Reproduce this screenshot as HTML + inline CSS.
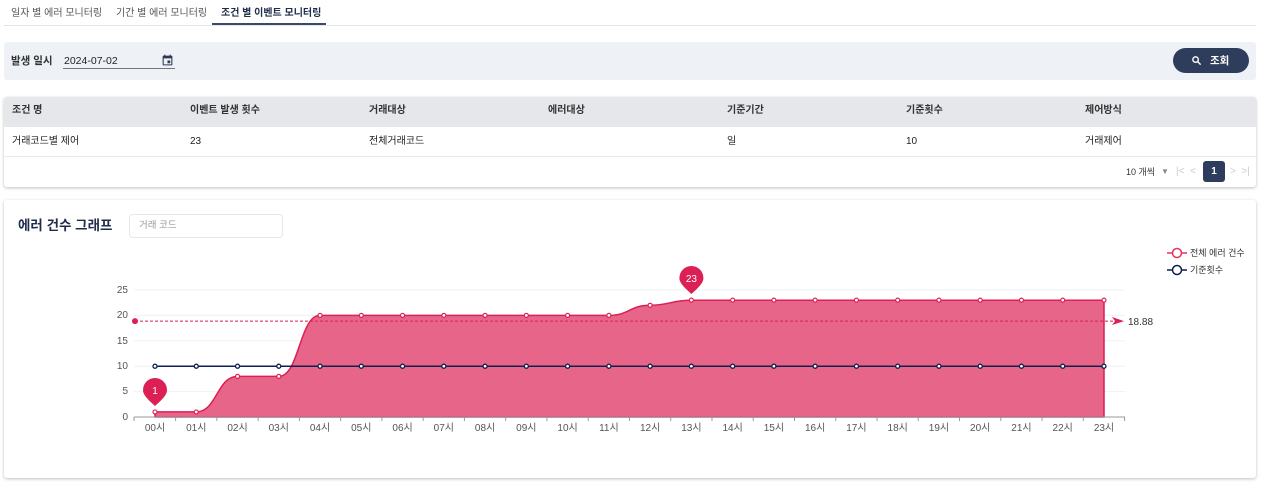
<!DOCTYPE html><html><head><meta charset="utf-8"><style>
body{margin:0;width:1266px;height:488px;background:#fff;font-family:"Liberation Sans","Noto Sans CJK KR",sans-serif;position:relative;overflow:hidden;color:#222}
.a{position:absolute;white-space:nowrap;line-height:12px}
.tab{font-size:10px;color:#555;top:8px}
</style></head><body>
<div class="a" style="left:4px;top:25px;width:1252px;height:1px;background:#e2e4e8"></div>
<div class="a tab" style="left:11px">일자 별 에러 모니터링</div>
<div class="a tab" style="left:116px">기간 별 에러 모니터링</div>
<div class="a tab" style="left:221px;color:#1f2d4a;font-weight:bold">조건 별 이벤트 모니터링</div>
<div class="a" style="left:212px;top:23px;width:114px;height:2px;background:#3b4a6b"></div>

<div class="a" style="left:4px;top:42px;width:1252px;height:38px;background:#eef2f7;border-radius:3px"></div>
<div class="a" style="left:11px;top:55px;font-size:10.5px;font-weight:bold;color:#333">발생 일시</div>
<div class="a" style="left:64px;top:55px;font-size:10.5px;color:#222">2024-07-02</div>
<div class="a" style="left:63px;top:68px;width:112px;height:1px;background:#777"></div>
<svg class="a" style="left:161px;top:53px" width="13" height="14" viewBox="0 0 24 24"><path fill="#2d3a55" d="M19 4h-1V2h-2v2H8V2H6v2H5a2 2 0 0 0-2 2v14a2 2 0 0 0 2 2h14a2 2 0 0 0 2-2V6a2 2 0 0 0-2-2zm0 16H5V9h14v11zm-7-7h5v5h-5z"/></svg>
<div class="a" style="left:1173px;top:48px;width:76px;height:25px;border-radius:13px;background:#2f3d5c"></div>
<svg class="a" style="left:1191px;top:55px" width="11" height="11" viewBox="0 0 24 24"><circle cx="10" cy="10" r="6" fill="none" stroke="#fff" stroke-width="3"/><path d="M14.5 14.5L21 21" stroke="#fff" stroke-width="3"/></svg>
<div class="a" style="left:1210px;top:55px;font-size:10.5px;font-weight:bold;color:#fff">조회</div>

<div class="a" style="left:4px;top:97px;width:1252px;height:90px;background:#fff;border-radius:3px;box-shadow:0 1px 3px rgba(0,0,0,.25)"></div>
<div class="a" style="left:4px;top:97px;width:1252px;height:30px;background:#e5e7eb;border-radius:3px 3px 0 0"></div>
<div class="a" style="left:4px;top:156px;width:1252px;height:1px;background:#e5e7eb"></div>
<div style="font-size:10px;font-weight:bold;color:#333">
<div class="a" style="left:12px;top:105px">조건 명</div><div class="a" style="left:190px;top:105px">이벤트 발생 횟수</div><div class="a" style="left:369px;top:105px">거래대상</div><div class="a" style="left:548px;top:105px">에러대상</div><div class="a" style="left:727px;top:105px">기준기간</div><div class="a" style="left:906px;top:105px">기준횟수</div><div class="a" style="left:1085px;top:105px">제어방식</div></div>
<div style="font-size:10px;color:#222">
<div class="a" style="left:12px;top:136px">거래코드별 제어</div><div class="a" style="left:190px;top:136px">23</div><div class="a" style="left:369px;top:136px">전체거래코드</div><div class="a" style="left:727px;top:136px">일</div><div class="a" style="left:906px;top:136px">10</div><div class="a" style="left:1085px;top:136px">거래제어</div></div>
<div class="a" style="left:1126px;top:166px;font-size:9px;color:#333">10 개씩</div>
<div class="a" style="left:1161px;top:166px;font-size:8px;color:#888">▼</div>
<div class="a" style="left:1176px;top:166px;font-size:10px;color:#ccc">|&lt; &nbsp;&lt;</div>
<div class="a" style="left:1203px;top:161px;width:22px;height:21px;background:#2f3d5c;border-radius:3px;color:#fff;font-size:10px;font-weight:bold;text-align:center;line-height:21px">1</div>
<div class="a" style="left:1230px;top:166px;font-size:10px;color:#ccc">&gt; &nbsp;&gt;|</div>

<div class="a" style="left:4px;top:200px;width:1252px;height:278px;background:#fff;border-radius:3px;box-shadow:0 1px 3px rgba(0,0,0,.25)"></div>
<div class="a" style="left:18px;top:218px;font-size:13.5px;line-height:16px;font-weight:bold;color:#1f2d4a">에러 건수 그래프</div>
<div class="a" style="left:129px;top:214px;width:152px;height:22px;border:1px solid #e5e7eb;border-radius:4px"></div>
<div class="a" style="left:139px;top:220px;font-size:9.5px;color:#999">거래 코드</div>

<svg class="a" style="left:0;top:0" width="1266" height="488" font-family="Liberation Sans,Noto Sans CJK KR,sans-serif">
<g stroke="#eef0f5" stroke-width="1"><line x1="134" x2="1125" y1="290" y2="290"/><line x1="134" x2="1125" y1="315.4" y2="315.4"/><line x1="134" x2="1125" y1="340.8" y2="340.8"/><line x1="134" x2="1125" y1="366.2" y2="366.2"/><line x1="134" x2="1125" y1="391.6" y2="391.6"/></g>
<g font-size="10" fill="#555" text-anchor="end"><text x="128" y="293">25</text><text x="128" y="318">20</text><text x="128" y="344">15</text><text x="128" y="369">10</text><text x="128" y="394">5</text><text x="128" y="420">0</text></g>
<path d="M155 411.9 C175.6 411.9 175.6 411.9 196.3 411.9 C216.9 411.9 216.9 376.4 237.5 376.4 C258.1 376.4 258.1 376.4 278.8 376.4 C299.4 376.4 299.4 315.4 320 315.4 L608.9 315.4 C629.5 315.4 629.5 305.2 650.1 305.2 C670.7 305.2 670.7 300.2 691.4 300.2 L1104 300.2 L1104 417 L155 417 Z" fill="#e4547c" fill-opacity=".9" stroke="#dc1f55" stroke-width="1.5"/>
<line x1="134" x2="1125" y1="417" y2="417" stroke="#999"/>
<g stroke="#999"><line x1="134" x2="134" y1="417" y2="421"/></g>
<line x1="135" y1="321.1" x2="1114" y2="321.1" stroke="#dc1f55" stroke-dasharray="3 2"/>
<circle cx="135" cy="321.1" r="3" fill="#dc1f55"/>
<path d="M1112 317 L1124 321.1 L1112 325 L1115 321.1Z" fill="#dc1f55"/>
<text x="1128" y="325" font-size="10" fill="#333">18.88</text>
<line x1="155" x2="1104" y1="366.2" y2="366.2" stroke="#0f1f4f" stroke-width="1.5"/>
<g id="pts"></g>
<path d="M155 406 c-9 -8 -12 -12 -12 -16 a12 12 0 1 1 24 0 c0 4 -3 8 -12 16z" fill="#dc1f55"/>
<text x="155" y="394" font-size="10" fill="#fff" text-anchor="middle">1</text>
<path d="M691.4 294 c-9 -8 -12 -12 -12 -16 a12 12 0 1 1 24 0 c0 4 -3 8 -12 16z" fill="#dc1f55"/>
<text x="691.4" y="282" font-size="10" fill="#fff" text-anchor="middle">23</text>
<line x1="1167" x2="1187" y1="253" y2="253" stroke="#e8335f" stroke-width="1.5"/><circle cx="1177" cy="253" r="4.5" fill="#fff" stroke="#e8335f" stroke-width="1.5"/>
<text x="1190" y="256" font-size="9" fill="#333">전체 에러 건수</text>
<line x1="1167" x2="1187" y1="270" y2="270" stroke="#0f1f4f" stroke-width="1.5"/><circle cx="1177" cy="270" r="4.5" fill="#fff" stroke="#0f1f4f" stroke-width="1.5"/>
<text x="1190" y="273" font-size="9" fill="#333">기준횟수</text>
<g id="xl" font-size="10" fill="#555" text-anchor="middle"></g>
</svg>
<script>
var ns="http://www.w3.org/2000/svg",v=[1,1,8,8,20,20,20,20,20,20,20,20,22,23,23,23,23,23,23,23,23,23,23,23];
var g=document.getElementById('pts'),xl=document.getElementById('xl');
function el(t,a,p){var e=document.createElementNS(ns,t);for(var k in a)e.setAttribute(k,a[k]);p.appendChild(e);return e}
for(var i=0;i<24;i++){var x=155+41.26*i;
el('circle',{cx:x,cy:417-5.08*v[i],r:2,fill:'#fff',stroke:'#dc1f55','stroke-width':1.2},g);
el('circle',{cx:x,cy:366.2,r:2,fill:'#fff',stroke:'#0f1f4f','stroke-width':1.3},g);
el('line',{x1:x+20.6,x2:x+20.6,y1:417,y2:421,stroke:'#999'},g);
var t=el('text',{x:x,y:431},xl);t.textContent=(i<10?'0':'')+i+'시';}
</script>
</body></html>
